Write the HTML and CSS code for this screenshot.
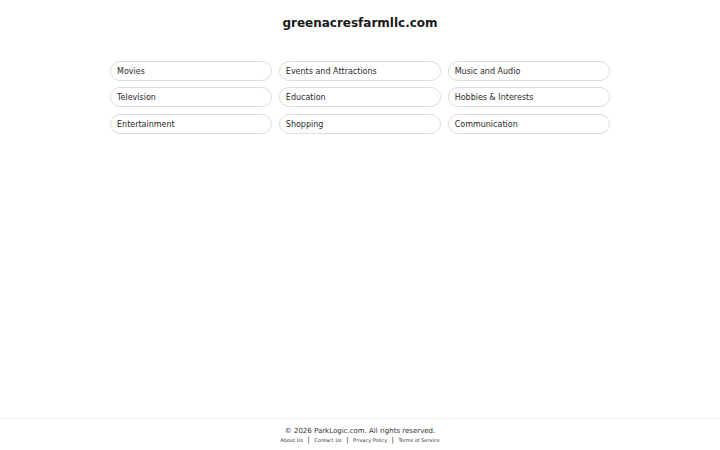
FILE: index.html
```html
<!DOCTYPE html>
<html>
<head>
<meta charset="utf-8">
<link rel="stylesheet" href="styles.css">
</head>
<body>
<div class="page">
  <main class="main">
    <h1 class="title">greenacresfarmllc.com</h1>
    <div class="grid">
      <a class="pill">Movies</a>
      <a class="pill">Events and Attractions</a>
      <a class="pill">Music and Audio</a>
      <a class="pill">Television</a>
      <a class="pill">Education</a>
      <a class="pill">Hobbies &amp; Interests</a>
      <a class="pill">Entertainment</a>
      <a class="pill">Shopping</a>
      <a class="pill">Communication</a>
    </div>
  </main>
  <footer class="footer">
    <div class="copy">© 2026 ParkLogic.com. All rights reserved.</div>
    <div class="links">
      <a>About Us</a><span class="sep">|</span><a>Contact Us</a><span class="sep">|</span><a>Privacy Policy</a><span class="sep">|</span><a>Terms of Service</a>
    </div>
  </footer>
</div>
</body>
</html>
```
FILE: styles.css
```css
html, body { margin: 0; padding: 0; }
body {
  font-family: "DejaVu Sans", sans-serif;
  color: #222;
  background: #fff;
}
.page {
  height: 450px;
  display: flex;
  flex-direction: column;
}
.main { flex: 1; }
.title {
  margin: 15px 0 0;
  text-align: center;
  font-size: 12px;
  font-weight: bold;
  line-height: 16px;
  color: #1a1a1a;
}
.grid {
  width: 500px;
  margin: 29.5px auto 0;
  display: grid;
  grid-template-columns: repeat(3, 1fr);
  column-gap: 6.5px;
  row-gap: 6.5px;
}
.pill {
  height: 18px;
  border: 1px solid #ddd;
  border-radius: 10px;
  padding: 0 6px;
  font-size: 8px;
  line-height: 19px;
  color: #2a2a2a;
}
.footer {
  border-top: 1px solid #eee;
  padding: 7px 0 6px;
  text-align: center;
}
.copy {
  font-size: 7px;
  line-height: 10px;
  color: #333;
}
.links {
  margin-top: 0;
  font-size: 5px;
  line-height: 8px;
  color: #333;
}
.sep { margin: 0 4.5px; font-size: 7px; }
```
